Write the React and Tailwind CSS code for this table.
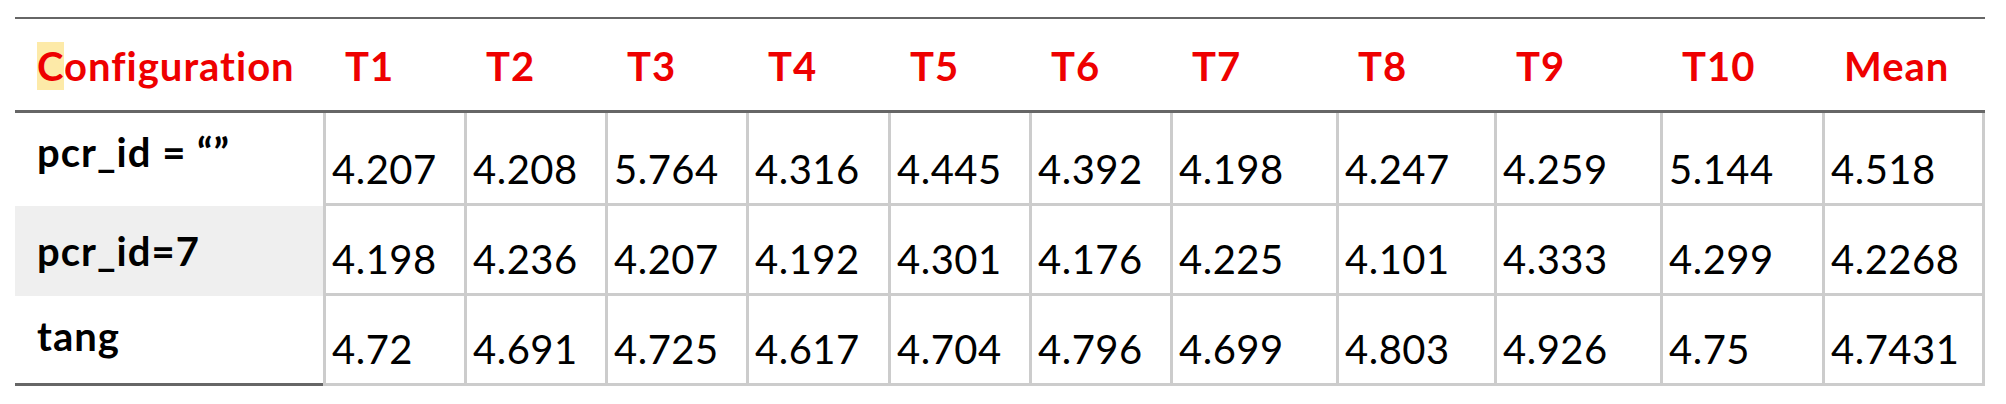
const cols = "grid grid-cols-[308px_141px_141px_141px_142px_141px_141px_166px_158px_166px_162px_163px]";

const heads = ["T1", "T2", "T3", "T4", "T5", "T6", "T7", "T8", "T9", "T10", "Mean"];

const rows = [
  {
    name: "pcr_id = \u201C\u201D",
    values: ["4.207", "4.208", "5.764", "4.316", "4.445", "4.392", "4.198", "4.247", "4.259", "5.144", "4.518"],
    h: "h-[93px]",
    cell: "h-[93px]",
    pt: "pt-[15px]",
    bg: "",
  },
  {
    name: "pcr_id=7",
    values: ["4.198", "4.236", "4.207", "4.192", "4.301", "4.176", "4.225", "4.101", "4.333", "4.299", "4.2268"],
    h: "h-[90px]",
    cell: "h-[90px]",
    pt: "pt-[21px]",
    bg: "bg-[#efefef]",
  },
  {
    name: "tang",
    values: ["4.72", "4.691", "4.725", "4.617", "4.704", "4.796", "4.699", "4.803", "4.926", "4.75", "4.7431"],
    h: "h-[90px]",
    cell: "h-[90px]",
    pt: "pt-[16px]",
    bg: "border-b-[3px] border-[#666]",
  },
];

export default function App() {
  return (
    <div className="min-h-screen bg-white pl-[15px] pt-[17px] font-['Lato','Liberation_Sans',sans-serif] text-[40px] leading-[48px] text-black [font-variant-ligatures:none]">
      <div className="w-[1970px]">
        {/* header */}
        <div className={`${cols} border-t-2 border-b-[3px] border-[#666] h-[96px]`}>
          <div className="flex items-center pl-[22px] pt-[3px] font-bold tracking-[1px] text-[#ee0000]">
            <span>
              <span className="bg-[#fdeaa8]">C</span>onfiguration
            </span>
          </div>
          {heads.map((t) => (
            <div key={t} className="flex items-center pl-[22px] pt-[3px] font-bold tracking-[1px] text-[#ee0000]">
              {t}
            </div>
          ))}
        </div>

        {/* body */}
        {rows.map((r) => (
          <div key={r.name} className={cols}>
            <div className={`${r.h} ${r.pt} ${r.bg} pl-[22px] font-bold tracking-[1px]`}>{r.name}</div>
            {r.values.map((v, i) => (
              <div
                key={i}
                className={`${r.cell} flex items-end pb-[10px] pl-[6px] tracking-[0.5px] border-l-[3px] border-b-[3px] border-[#cccccc] ${
                  i === r.values.length - 1 ? "border-r-[3px]" : ""
                }`}
              >
                {v}
              </div>
            ))}
          </div>
        ))}
      </div>
    </div>
  );
}
